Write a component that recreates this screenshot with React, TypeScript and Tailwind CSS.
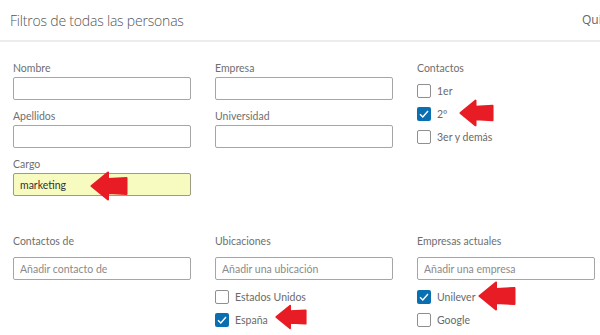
import React from 'react';

const Arrow: React.FC<{ className: string }> = ({ className }) => (
  <svg viewBox="0 0 38 30" className={`absolute ${className}`}>
    <polygon
      points="1.5,15 18,1.5 18,8 36.5,7 36.5,23 18,22 18,28.5"
      fill="#e81c24"
      stroke="#e81c24"
      strokeWidth="2"
      strokeLinejoin="round"
    />
  </svg>
);

const Field: React.FC<{ label: string; value?: string; highlight?: boolean }> = ({
  label,
  value,
  highlight,
}) => (
  <div className="flex flex-col">
    <span className="h-[14px] text-[10.5px] leading-[14px] text-[#6f6f6f]">{label}</span>
    <input
      readOnly
      defaultValue={value}
      className={`mt-[2px] h-[23px] w-full rounded-[2px] border px-[6px] text-[10.5px] text-[#333] outline-none ${
        highlight ? 'border-[#9c9c84] bg-[#f7fbbf]' : 'border-[#a6a6a6] bg-white'
      }`}
    />
  </div>
);

const Check: React.FC<{ label: string; checked?: boolean }> = ({ label, checked }) => (
  <div className="flex h-[23px] items-center gap-[6px]">
    {checked ? (
      <span className="flex h-[14px] w-[14px] items-center justify-center rounded-[2px] bg-[#0a6fb0]">
        <svg viewBox="0 0 14 14" className="h-[14px] w-[14px]">
          <path d="M3 7.3 L5.8 10 L11 4" fill="none" stroke="white" strokeWidth="1.4" />
        </svg>
      </span>
    ) : (
      <span className="h-[14px] w-[14px] rounded-[2px] border border-[#8f8f8f] bg-white" />
    )}
    <span className="text-[10.5px] leading-[14px] text-[#6a6a6a]">{label}</span>
  </div>
);

const SearchBox: React.FC<{ label: string; placeholder: string; children?: React.ReactNode }> = ({
  label,
  placeholder,
  children,
}) => (
  <div className="flex flex-col">
    <span className="h-[14px] text-[10.5px] leading-[14px] text-[#6f6f6f]">{label}</span>
    <input
      readOnly
      placeholder={placeholder}
      className="mt-[9px] h-[23px] w-full rounded-[2px] border border-[#a6a6a6] bg-white px-[6px] text-[10.5px] text-[#333] outline-none placeholder:text-[#8a8a8a]"
    />
    {children && <div className="mt-[5px] flex flex-col">{children}</div>}
  </div>
);

export default function App() {
  return (
    <div className="relative h-[335px] w-[600px] overflow-hidden bg-white font-['Lato',sans-serif]">
      {/* Header */}
      <div className="flex h-[42px] items-center border-b-2 border-[#ececec] pl-[10px] font-['Open_Sans',sans-serif]">
        <div className="w-[572px] shrink-0 text-[14px] font-light tracking-[-0.2px] text-[#555]">
          Filtros de todas las personas
        </div>
        <div className="whitespace-nowrap text-[12px] text-[#666]">Quitar</div>
      </div>

      {/* Body */}
      <div className="px-[13px] pt-[19px]">
        <div className="grid grid-cols-[178px_178px_178px] gap-x-[24px]">
          <div className="flex flex-col gap-[9px]">
            <Field label="Nombre" />
            <Field label="Apellidos" />
            <Field label="Cargo" value="marketing" highlight />
          </div>
          <div className="flex flex-col gap-[9px]">
            <Field label="Empresa" />
            <Field label="Universidad" />
          </div>
          <div className="flex flex-col">
            <span className="h-[14px] text-[10.5px] leading-[14px] text-[#6f6f6f]">Contactos</span>
            <div className="mt-[4px] flex flex-col">
              <Check label="1er" />
              <Check label="2º" checked />
              <Check label="3er y demás" />
            </div>
          </div>
        </div>

        <div className="mt-[38px] grid grid-cols-[178px_178px_178px] gap-x-[24px]">
          <SearchBox label="Contactos de" placeholder="Añadir contacto de" />
          <SearchBox label="Ubicaciones" placeholder="Añadir una ubicación">
            <Check label="Estados Unidos" />
            <Check label="España" checked />
          </SearchBox>
          <SearchBox label="Empresas actuales" placeholder="Añadir una empresa">
            <Check label="Unilever" checked />
            <Check label="Google" />
          </SearchBox>
        </div>
      </div>

      {/* Red annotation arrows */}
      <Arrow className="left-[459px] top-[98px] h-[30px] w-[35px]" />
      <Arrow className="left-[90px] top-[171px] h-[30px] w-[38px]" />
      <Arrow className="left-[275px] top-[302px] h-[30px] w-[32px]" />
      <Arrow className="left-[478px] top-[281px] h-[30px] w-[38px]" />
    </div>
  );
}
